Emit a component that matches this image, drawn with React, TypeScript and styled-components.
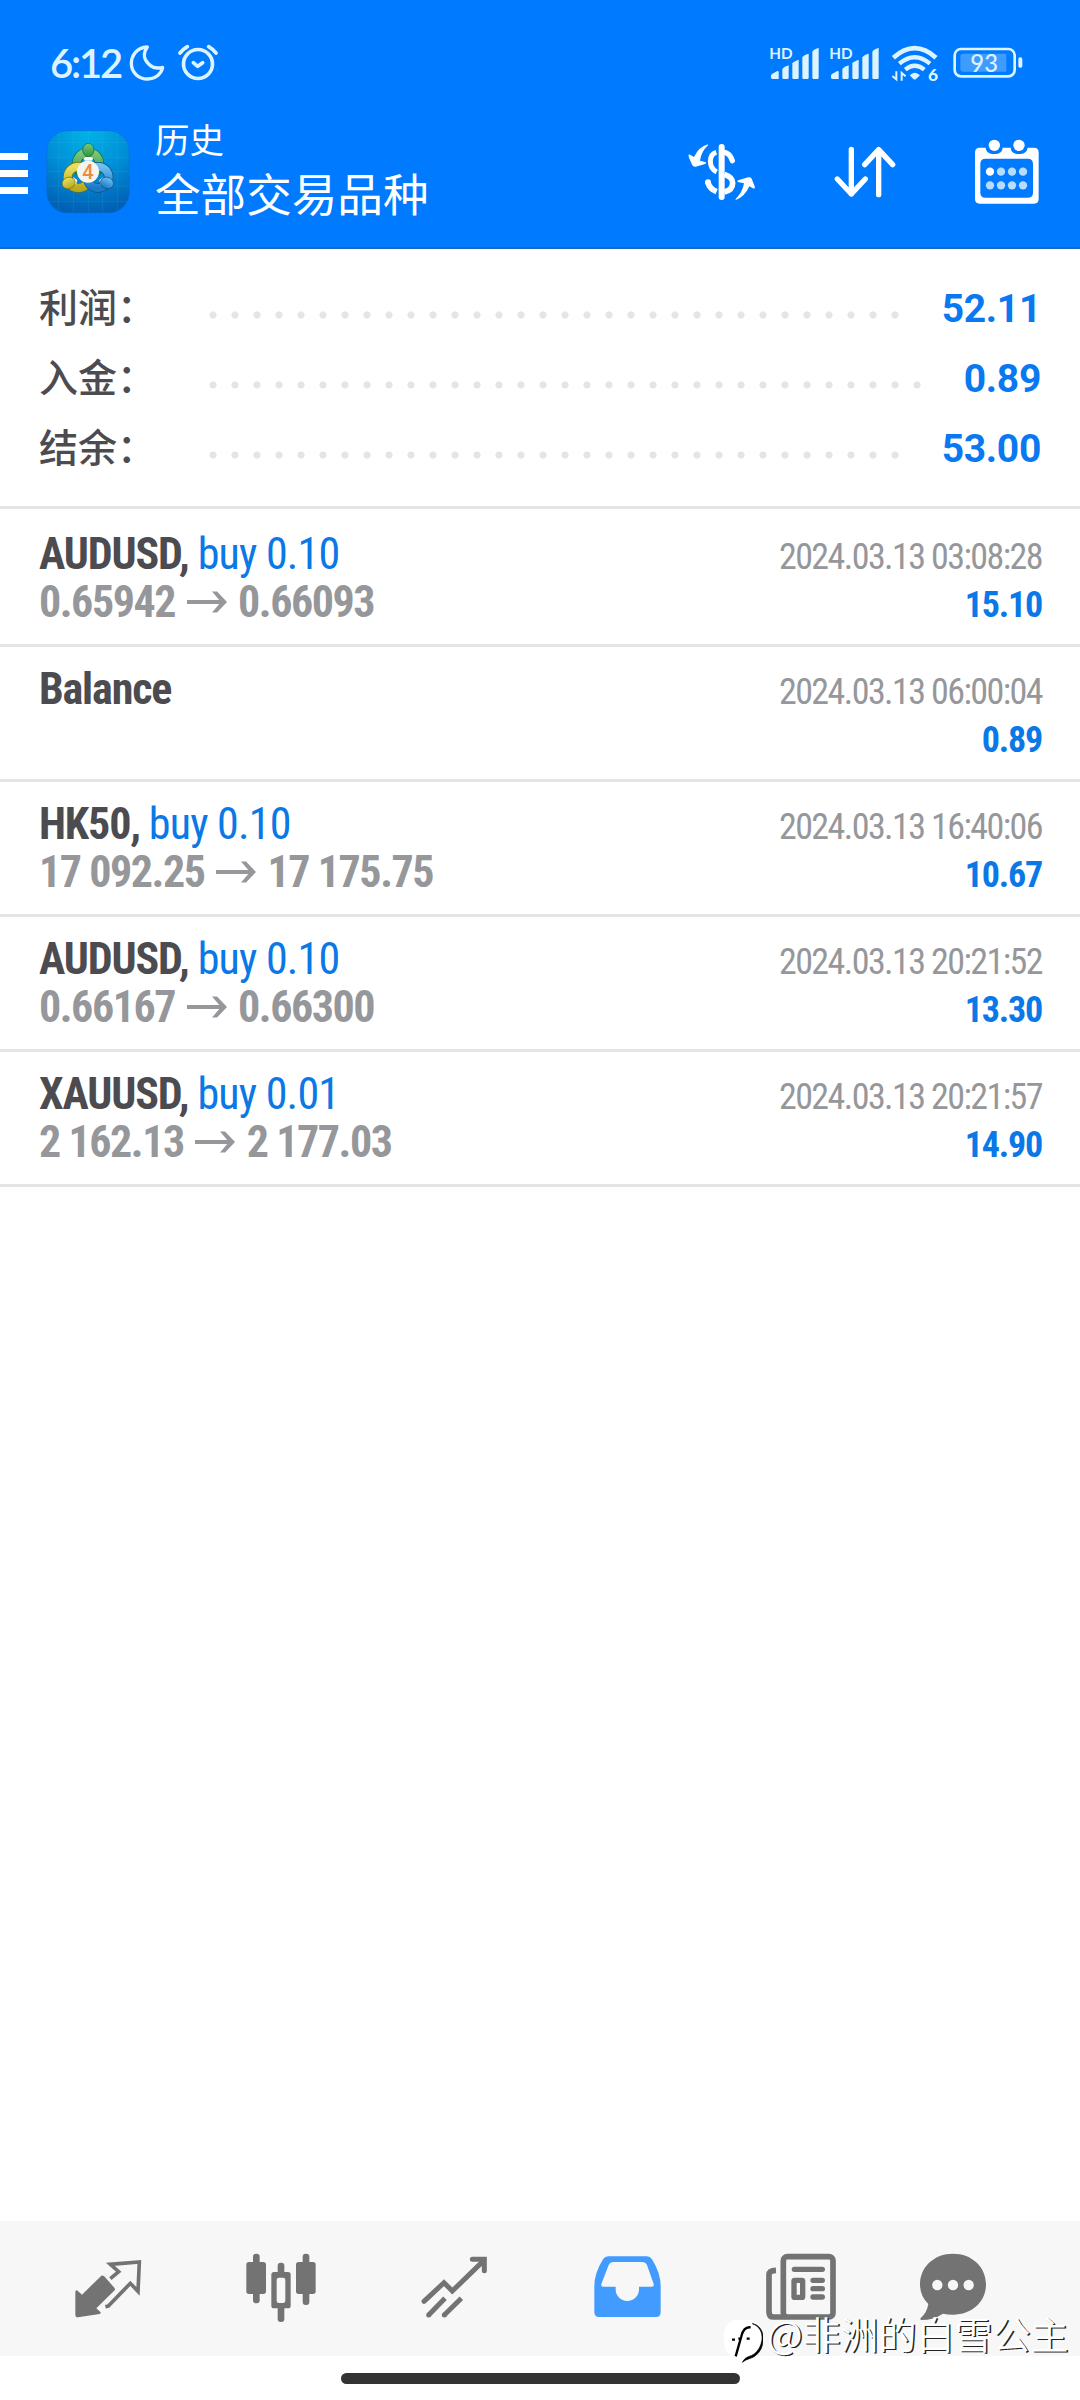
import React from "react";
import styled, { createGlobalStyle } from "styled-components";

const GlobalStyle = createGlobalStyle`
  * { box-sizing: border-box; }
  body { margin: 0; background: #fff; }
`;

const CJK = `Roboto, "Noto Sans CJK SC", sans-serif`;

const Screen = styled.main`
  position: relative;
  width: 1080px;
  height: 2400px;
  display: flex;
  flex-direction: column;
  background: #fff;
  font-family: ${CJK};
  overflow: hidden;
`;

const Header = styled.header`
  height: 249px;
  background: #007aff;
  border-bottom: 2px solid #1769c4;
`;

const StatusBar = styled.div`
  height: 126px;
  padding: 0 57px 0 50px;
  display: flex;
  align-items: center;
  color: #dcf4ff;
`;

const Clock = styled.span`
  width: 79px;
  font: 600 40px/46px Lato, sans-serif;
  letter-spacing: -2.2px;
  white-space: nowrap;
`;

const StatusGroup = styled.div<{ $right?: boolean }>`
  display: flex;
  align-items: center;
  margin-left: ${(p) => (p.$right ? "auto" : "0")};
`;

const Toolbar = styled.div`
  height: 92px;
  display: flex;
  align-items: center;
`;

const MenuButton = styled.div`
  width: 28px;
  height: 41px;
  margin: 3px 18px 0 0;
  display: flex;
  flex-direction: column;
  justify-content: space-between;
`;

const MenuLine = styled.span`
  height: 7px;
  background: #fff;
`;

const Titles = styled.div`
  display: flex;
  flex-direction: column;
  gap: 8px;
  margin: 2px 0 0 25px;
  color: #fff;
`;

const Subtitle = styled.div`
  font-size: 34.5px;
  line-height: 40px;
`;

const Title = styled.div`
  font-size: 45.6px;
  line-height: 56px;
`;

const Actions = styled.div`
  display: flex;
  align-items: center;
  margin-left: auto;
  padding-right: 40px;
`;

const Summary = styled.section`
  height: 260px;
  padding: 25px 39px 0 39px;
  border-bottom: 3px solid #e5e5e5;
`;

const SummaryRow = styled.div`
  height: 70px;
  display: flex;
  align-items: center;
`;

const SummaryLabel = styled.span`
  width: 163px;
  font: 500 39px/70px ${CJK};
  color: #4c4b50;
`;

const Dots = styled.span<{ $count: number }>`
  width: ${(p) => p.$count * 22}px;
  height: 8px;
  margin-top: 12px;
  background: radial-gradient(circle at center, #e5e5e5 3.2px, transparent 4px) 0 0 / 22px 8px repeat-x;
`;

const SummaryValue = styled.span`
  margin-left: auto;
  font: 700 39px/70px Roboto, sans-serif;
  letter-spacing: -0.3px;
  color: #0a78f0;
`;

const Deals = styled.section`
  flex: 1;
  padding-top: 3px;
`;

const Deal = styled.article`
  height: 135px;
  padding: 18px 38px 0 39px;
  display: flex;
  justify-content: space-between;
  border-bottom: 3px solid #e5e5e5;
`;

const Column = styled.div<{ $right?: boolean }>`
  display: flex;
  flex-direction: column;
  align-items: ${(p) => (p.$right ? "flex-end" : "flex-start")};
  padding-top: ${(p) => (p.$right ? 3 : 0)}px;
  font-family: "Roboto Condensed", Roboto, sans-serif;
  white-space: pre;
  line-height: 48px;
`;

const Symbol = styled.div`
  font-size: 44px;
  font-weight: 700;
  letter-spacing: -1.15px;
  color: #4c4b50;
`;

const Side = styled.span`
  font-weight: 400;
  letter-spacing: -0.8px;
  color: #0a78e6;
`;

const Prices = styled.div`
  display: flex;
  align-items: center;
  gap: 11.5px;
  font-size: 44px;
  font-weight: 700;
  letter-spacing: -1.45px;
  color: #96979b;
`;

const Time = styled.div`
  font-size: 36px;
  letter-spacing: -1.57px;
  color: #96979b;
`;

const Profit = styled.div`
  font-size: 36px;
  font-weight: 700;
  letter-spacing: -1.2px;
  color: #0a78e6;
`;

const NavBar = styled.nav`
  height: 135px;
  padding: 1px 0 0 21.5px;
  display: flex;
  align-items: center;
  background: #f7f7f7;
`;

const NavItem = styled.div<{ $w: number }>`
  width: ${(p) => p.$w}px;
  height: 72px;
  display: flex;
  justify-content: center;
`;

const GestureArea = styled.footer`
  height: 44px;
  display: flex;
  justify-content: center;
  padding-top: 17px;
`;

const GesturePill = styled.div`
  width: 399px;
  height: 11px;
  border-radius: 6px;
  background: #333;
`;

const Watermark = styled.div`
  position: absolute;
  left: 723px;
  top: 2310px;
  display: flex;
  align-items: flex-start;
  gap: 4px;
  color: #fff;
  font: 350 38px/46px "Noto Sans CJK SC", sans-serif;
  text-shadow: 1.4px 1.4px 0 #222;
  white-space: nowrap;

  svg {
    margin-top: 9px;
  }
`;

const MoonIcon = () => (
  <svg width="36" height="38" viewBox="387 72 108 114" fill="none" stroke="currentColor" strokeWidth="10" strokeLinejoin="round">
    <path d="M442 81C405 83 394 112 394 130C394 158 416 177 443 177C469 177 485 159 488 142C474 146 457 143 446 132C432 119 428 100 442 81Z" />
  </svg>
);

const AlarmIcon = () => (
  <svg width="40" height="38" viewBox="536 72 120 114" fill="none" stroke="currentColor" strokeWidth="11" strokeLinecap="round">
    <circle cx="596" cy="132" r="43.5" />
    <path d="M582 128L595 139L610 128" strokeLinejoin="round" />
    <path d="M542 99Q552 87 564 80M628 80Q640 87 650 99" />
  </svg>
);

const SignalIcon = () => (
  <svg width="50" height="50" viewBox="330 54 150 150" fill="currentColor">
    <text x="331" y="117" fontSize="48" fontWeight="700" fontFamily="Lato, sans-serif" textLength="70" lengthAdjust="spacingAndGlyphs">HD</text>
    <path d="M340 177Q336 177 336 172V166Q337 162 355 153Q359 152 359 157V177Z" />
    <path d="M370 173V147Q372 143 389 136V173Q389 177 385 177H374Q370 177 370 173Z" />
    <path d="M400 173V130Q402 125 419 119V173Q419 177 415 177H404Q400 177 400 173Z" />
    <path d="M430 173V112Q432 106 449 101V173Q449 177 445 177H434Q430 177 430 173Z" />
    <path d="M460 173V96Q462 89 479 84V173Q479 177 475 177H464Q460 177 460 173Z" />
  </svg>
);

const WifiIcon = () => (
  <svg width="48" height="50" viewBox="696 56 144 150" fill="none" stroke="currentColor">
    <path d="M703 115Q767 58 831 115" strokeWidth="14" />
    <path d="M721 133Q767 94 813 133" strokeWidth="13" />
    <path d="M739 151Q767 128 796 151" strokeWidth="13" />
    <path d="M752 168Q767 153 783 168L771 179Q767 182 763 179Z" fill="currentColor" stroke="none" />
    <path d="M712 156V180L700 170M728 184V161L740 171" strokeWidth="6" />
    <text x="807" y="185" fontSize="52" fontWeight="900" fontFamily="Lato, sans-serif" fill="currentColor" stroke="none">6</text>
  </svg>
);

const BatteryIcon = () => (
  <svg width="70" height="32" viewBox="881 82 210 96">
    <rect x="886" y="88" width="180" height="82" rx="19" fill="none" stroke="currentColor" strokeWidth="8" />
    <path d="M912 102H1041V156H912Q903 156 903 147V111Q903 102 912 102Z" fill="#409bff" />
    <rect x="1077" y="113" width="12" height="31" rx="5" fill="currentColor" />
    <text x="933" y="156" fontSize="72" fontWeight="500" fontFamily="Lato, sans-serif" fill="currentColor" textLength="83" lengthAdjust="spacingAndGlyphs">93</text>
  </svg>
);

const AppLogo = () => (
  <svg width="84" height="84" viewBox="0 0 252 252">
    <defs>
      <radialGradient id="tile" cx="50%" cy="0%" r="100%">
        <stop offset="0" stopColor="#00b4e6" />
        <stop offset="0.5" stopColor="#0090d8" />
        <stop offset="1" stopColor="#0060b4" />
      </radialGradient>
      <linearGradient id="green" x1="0" y1="0" x2="0" y2="1">
        <stop offset="0" stopColor="#7cc87c" />
        <stop offset="1" stopColor="#2c9440" />
      </linearGradient>
      <linearGradient id="yellow" x1="0" y1="0" x2="0" y2="1">
        <stop offset="0" stopColor="#e8e060" />
        <stop offset="1" stopColor="#b8aa20" />
      </linearGradient>
      <linearGradient id="blue" x1="0" y1="0" x2="0" y2="1">
        <stop offset="0" stopColor="#6fc0f0" />
        <stop offset="1" stopColor="#1a78c4" />
      </linearGradient>
    </defs>
    <rect x="2" y="2" width="248" height="247" rx="62" fill="url(#tile)" stroke="#0670d8" strokeWidth="2" />
    <path d="M38 8V242M82 2V250M127 2V250M170 2V250M214 8V242M2 38H250M2 82H250M2 125H250M2 168H250M8 214H244" stroke="#5cc8f4" strokeOpacity="0.18" strokeWidth="2" />
    <circle cx="126" cy="101" r="34" fill="none" stroke="#0c6a2c" strokeWidth="28" />
    <circle cx="126" cy="101" r="34" fill="none" stroke="url(#green)" strokeWidth="24" />
    <circle cx="97" cy="142" r="32" fill="none" stroke="#77700f" strokeWidth="28" />
    <circle cx="97" cy="142" r="32" fill="none" stroke="url(#yellow)" strokeWidth="24" />
    <circle cx="156" cy="142" r="32" fill="none" stroke="#0b4f88" strokeWidth="28" />
    <circle cx="156" cy="142" r="32" fill="none" stroke="url(#blue)" strokeWidth="24" />
    <path d="M112 84L127 78L142 84L138 92H116Z" fill="#f2faf2" />
    <path d="M82 142L94 150L90 164L78 156Z" fill="#fbfbe8" />
    <path d="M172 142L160 150L164 164L178 156Z" fill="#eef8ff" />
    <ellipse cx="127" cy="60" rx="17" ry="20" fill="url(#green)" stroke="#0c6a2c" strokeWidth="2" />
    <ellipse cx="68" cy="159" rx="20" ry="17" transform="rotate(-25 68 159)" fill="url(#yellow)" stroke="#77700f" strokeWidth="2" />
    <ellipse cx="183" cy="159" rx="20" ry="17" transform="rotate(25 183 159)" fill="url(#blue)" stroke="#0b4f88" strokeWidth="2" />
    <circle cx="126" cy="125" r="33" fill="#f6f4f1" />
    <text x="126" y="146" fontSize="60" fontFamily="Roboto, sans-serif" fontWeight="500" fill="#ee8a3c" textAnchor="middle">4</text>
  </svg>
);

const CurrencyIcon = () => (
  <svg width="68" height="58" viewBox="85 369 204 174" fill="none" stroke="#fff">
    <path d="M186 381V531" strokeWidth="18" strokeLinecap="round" />
    <path d="M170 397Q152 402 152 424Q152 446 171 456" strokeWidth="15" />
    <path d="M194 397Q210 399 218 422" strokeWidth="16" strokeLinecap="round" />
    <path d="M194 463Q219 471 219 489Q219 510 194 516" strokeWidth="17" />
    <path d="M145 487Q149 506 171 515" strokeWidth="17" strokeLinecap="butt" />
    <circle cx="145" cy="487" r="9" fill="#fff" stroke="none" />
    <path d="M145 373Q118 380 103 411L88 403Q85 406 88 413L98 436Q101 441 108 440L134 433Q141 431 139 427L121 422Q124 396 145 376Z" fill="#fff" stroke="none" />
    <path d="M228 540Q255 531 269 499L283 506Q287 506 285 499L276 476Q273 471 266 472L238 480Q231 482 234 486L253 490Q249 516 228 537Z" fill="#fff" stroke="none" />
  </svg>
);

const SortIcon = () => (
  <svg width="64" height="54" viewBox="519 375 192 162" fill="none" stroke="#fff" strokeWidth="16" strokeLinecap="round" strokeLinejoin="round">
    <path d="M574 388V522M532 477L574 522L616 477" />
    <path d="M656 524V389M614 434L656 389L698 434" />
  </svg>
);

const CalendarIcon = () => {
  const xs = [990, 1023, 1056, 1089];
  return (
    <svg width="66" height="68" viewBox="942 351 198 204">
      <path fillRule="evenodd" fill="#fff" d="M959 380H977C978 393 988 399 1003 399C1018 399 1027 393 1028 380H1052C1053 393 1062 399 1077 399C1092 399 1101 393 1103 380H1122Q1136 380 1136 395V534Q1136 548 1122 548H959Q945 548 945 534V395Q945 380 959 380ZM977 413Q961 413 961 429V515Q961 530 977 530H1103Q1119 530 1119 515V429Q1119 413 1103 413Z" />
      <circle cx="1003" cy="373" r="17" fill="#fff" />
      <circle cx="1077" cy="373" r="17" fill="#fff" />
      {[452, 493].map((y) =>
        xs.map((x) => <circle key={`${x}-${y}`} cx={x} cy={y} r="12.5" fill={x === 990 && y === 452 ? "#fff" : "#b8dcff"} />)
      )}
    </svg>
  );
};

const ArrowIcon = () => (
  <svg width="40" height="22" viewBox="0 0 40 22">
    <path d="M0 9H35V13H0Z" fill="currentColor" />
    <path d="M25 0.5H30L40 11L30 21.5H25L34 11Z" fill="currentColor" />
  </svg>
);

const navIcon = (x: number) => ({ width: 72, height: 72, viewBox: `${x} 69 216 216` });

const QuotesIcon = () => (
  <svg {...navIcon(36)}>
    <path d="M129 137Q125 136 121 140L66 194L51 181Q46 180 46 186V254Q46 262 54 262L119 252Q124 250 121 246L109 235L164 181Q166 177 163 173L134 140Q132 137 129 137Z" fill="#737373" />
    <path d="M151 146L176 125L151 103L238 96L234 184L211 160L145 228L136 230" fill="none" stroke="#737373" strokeWidth="11" />
  </svg>
);

const ChartIcon = () => (
  <svg {...navIcon(555)} fill="#737373">
    <rect x="579" y="71" width="20" height="149" rx="9" />
    <rect x="559" y="96" width="59" height="96" rx="8" />
    <rect x="728" y="71" width="20" height="154" rx="9" />
    <rect x="708" y="96" width="59" height="96" rx="8" />
    <rect x="653" y="98" width="20" height="178" rx="9" />
    <rect x="634" y="126" width="58" height="109" rx="8" />
    <rect x="650" y="143" width="26" height="76" rx="7" fill="#f7f7f7" />
  </svg>
);

const TradeIcon = () => (
  <svg {...navIcon(1074)} fill="none" stroke="#737373" strokeWidth="15">
    <path d="M1092 214L1152 158L1177 183L1268 95" strokeLinecap="round" />
    <path d="M1237 88H1273V122" strokeLinecap="round" strokeWidth="15" />
    <path d="M1155 205L1106 255M1204 205L1153 255" />
    <circle cx="1106" cy="255" r="7.5" fill="#737373" stroke="none" />
    <circle cx="1153" cy="255" r="7.5" fill="#737373" stroke="none" />
  </svg>
);

const HistoryIcon = () => (
  <svg {...navIcon(33)}>
    <path fillRule="evenodd" fill="#429bff" d="M85 79H201Q210 79 216 88Q242 130 242 168V247Q242 261 228 261H57Q43 261 43 247V168Q43 130 69 88Q75 79 85 79ZM101 96Q90 96 86 105L64 162Q62 170 69 170H107V178C107 198 122 213 142 213C162 213 177 198 177 178V170H216Q223 170 221 162L201 105Q197 96 186 96Z" />
  </svg>
);

const NewsIcon = () => (
  <svg {...navIcon(552)} fill="none" stroke="#737373">
    <rect x="610" y="80" width="149" height="181" rx="12" strokeWidth="17" />
    <path d="M588 121Q567 122 567 134V245Q567 261 580 261H620" strokeWidth="17" />
    <path d="M643 118H727M699 151H727M699 176H727M699 201H727" strokeWidth="16" strokeLinecap="round" />
    <rect x="642" y="151" width="26" height="51" rx="2" strokeWidth="16" />
  </svg>
);

const ChatIcon = () => (
  <svg {...navIcon(1011)}>
    <path fill="#737373" d="M1119 71C1176 71 1218 111 1218 163C1218 215 1176 254 1119 254Q1101 254 1089 251Q1060 270 1025 270Q1017 269 1023 263Q1041 247 1045 222Q1020 198 1020 163C1020 111 1062 71 1119 71Z" />
    <circle cx="1072" cy="165" r="15.5" fill="#f7f7f7" />
    <circle cx="1119" cy="165" r="15.5" fill="#f7f7f7" />
    <circle cx="1166" cy="165" r="15.5" fill="#f7f7f7" />
  </svg>
);

const WatermarkLogo = () => (
  <svg width="40" height="44" viewBox="432 268 120 132">
    <path d="M470 271H513Q548 275 548 325Q546 360 520 380Q500 384 490 396L487 383H463Q434 370 434 325Q434 275 470 271Z" fill="#fff" />
    <path d="M520 282C550 292 557 325 541 355Q529 376 508 381Q497 384 490 398Q499 390 511 387Q534 381 546 358C562 320 548 286 520 282Z" fill="#000" stroke="#000" strokeWidth="2" />
    <path d="M515 293Q494 290 487 320L470 380M459 330H468M478 327H486M503 327H512" fill="none" stroke="#000" strokeWidth="7" />
  </svg>
);

const summary = [
  { label: "利润：", value: "52.11", dots: 32 },
  { label: "入金：", value: "0.89", dots: 33 },
  { label: "结余：", value: "53.00", dots: 32 },
];

const deals = [
  { name: "AUDUSD", side: "buy 0.10", from: "0.65942", to: "0.66093", time: "2024.03.13 03:08:28", profit: "15.10" },
  { name: "Balance", time: "2024.03.13 06:00:04", profit: "0.89" },
  { name: "HK50", side: "buy 0.10", from: "17 092.25", to: "17 175.75", time: "2024.03.13 16:40:06", profit: "10.67" },
  { name: "AUDUSD", side: "buy 0.10", from: "0.66167", to: "0.66300", time: "2024.03.13 20:21:52", profit: "13.30" },
  { name: "XAUUSD", side: "buy 0.01", from: "2 162.13", to: "2 177.03", time: "2024.03.13 20:21:57", profit: "14.90" },
];

const navItems = [
  { Icon: QuotesIcon, w: 173 },
  { Icon: ChartIcon, w: 173 },
  { Icon: TradeIcon, w: 173 },
  { Icon: HistoryIcon, w: 173 },
  { Icon: NewsIcon, w: 173 },
  { Icon: ChatIcon, w: 133 },
];

const Gap = styled.span<{ $w: number }>`
  width: ${(p) => p.$w}px;
`;

export default function App() {
  return (
    <Screen>
      <GlobalStyle />
      <Header>
        <StatusBar>
          <Clock>6:12</Clock>
          <StatusGroup>
            <MoonIcon />
            <Gap $w={13} />
            <AlarmIcon />
          </StatusGroup>
          <StatusGroup $right>
            <SignalIcon />
            <Gap $w={10} />
            <SignalIcon />
            <Gap $w={12} />
            <WifiIcon />
            <Gap $w={14} />
            <BatteryIcon />
          </StatusGroup>
        </StatusBar>
        <Toolbar>
          <MenuButton>
            <MenuLine />
            <MenuLine />
            <MenuLine />
          </MenuButton>
          <AppLogo />
          <Titles>
            <Subtitle>历史</Subtitle>
            <Title>全部交易品种</Title>
          </Titles>
          <Actions>
            <CurrencyIcon />
            <Gap $w={77} />
            <SortIcon />
            <Gap $w={77} />
            <CalendarIcon />
          </Actions>
        </Toolbar>
      </Header>
      <Summary>
        {summary.map((s) => (
          <SummaryRow key={s.label}>
            <SummaryLabel>{s.label}</SummaryLabel>
            <Dots $count={s.dots} />
            <SummaryValue>{s.value}</SummaryValue>
          </SummaryRow>
        ))}
      </Summary>
      <Deals>
        {deals.map((d) => (
          <Deal key={d.time}>
            <Column>
              <Symbol>
                {d.name}
                {d.side && ", "}
                {d.side && <Side>{d.side}</Side>}
              </Symbol>
              {d.from && (
                <Prices>
                  <span>{d.from}</span>
                  <ArrowIcon />
                  <span>{d.to}</span>
                </Prices>
              )}
            </Column>
            <Column $right>
              <Time>{d.time}</Time>
              <Profit>{d.profit}</Profit>
            </Column>
          </Deal>
        ))}
      </Deals>
      <NavBar>
        {navItems.map(({ Icon, w }, i) => (
          <NavItem key={i} $w={w}>
            <Icon />
          </NavItem>
        ))}
      </NavBar>
      <GestureArea>
        <GesturePill />
      </GestureArea>
      <Watermark>
        <WatermarkLogo />
        <span>@非洲的白雪公主</span>
      </Watermark>
    </Screen>
  );
}
